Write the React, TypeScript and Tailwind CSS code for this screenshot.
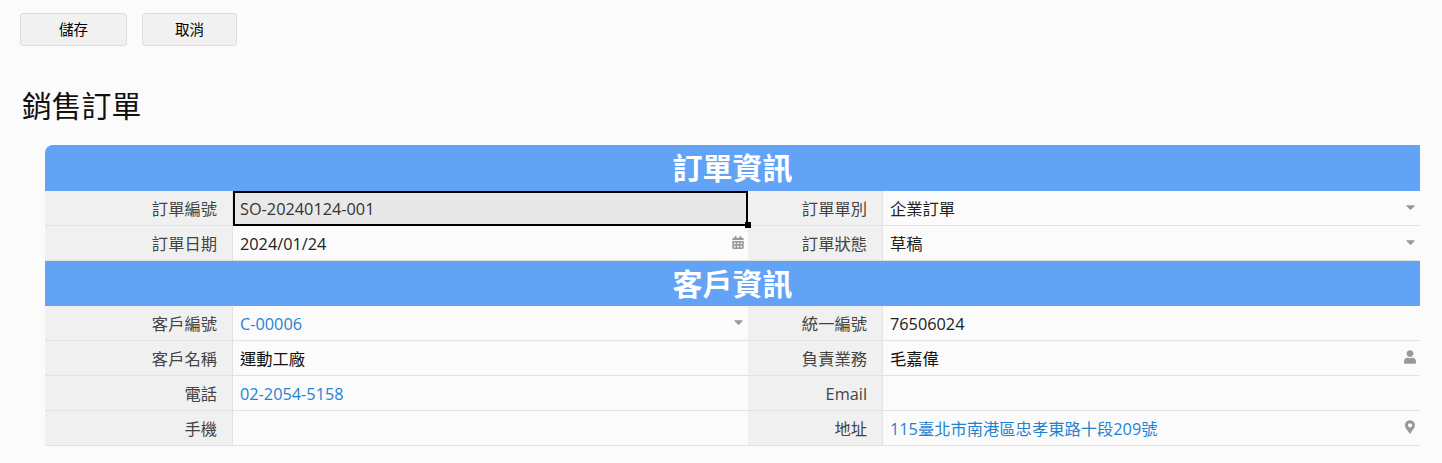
import type { ReactNode } from "react";
import { FaCalendarAlt, FaCaretDown, FaMapMarkerAlt, FaUser } from "react-icons/fa";

const font = "font-['Open_Sans','Noto_Sans_CJK_TC',sans-serif]";

function Section({ title }: { title: string }) {
    return (
        <div className="col-span-4 flex h-[45px] items-center justify-center bg-[#63a3f5] text-[30px] font-bold leading-none text-white first:h-[46px] first:rounded-tl-lg">
            {title}
        </div>
    );
}

function Label({ children }: { children: ReactNode }) {
    return (
        <div className="flex h-[35px] items-center justify-end border-r border-b border-[#e2e2e2] bg-[#f0f0f0] pr-[15px] pt-[2px] text-[#444]">
            {children}
        </div>
    );
}

interface ValueProps {
    children?: ReactNode;
    icon?: ReactNode;
    tone?: string;
}

function Value({ children, icon, tone = "text-[#222]" }: ValueProps) {
    return (
        <div className={`flex h-[35px] items-center justify-between border-b border-[#e2e2e2] pl-[7px] pr-[3px] ${tone}`}>
            <span className="pt-[2px]">{children}</span>
            {icon && <span className="flex w-[14px] justify-center text-[#999]">{icon}</span>}
        </div>
    );
}

function Caret() {
    return <FaCaretDown className="mb-[2px] h-[14px] w-[11px]" />;
}

export default function App() {
    return (
        <div className={`min-h-[463px] bg-[#fbfbfb] pl-[20px] pt-[13px] text-[16.3px] ${font}`}>
            <div className="flex gap-[15px] text-[14.5px] text-black">
                <button className="h-[33px] w-[107px] rounded-[3px] border border-[#dddddd] bg-[#f1f1f1]">儲存</button>
                <button className="h-[33px] w-[95px] rounded-[3px] border border-[#dddddd] bg-[#f1f1f1]">取消</button>
            </div>
            <h1 className="mt-[40px] pl-[2px] text-[29.8px] font-normal leading-[40px] text-[#111]">銷售訂單</h1>
            <div className="relative ml-[25px] mt-[19px] grid w-[1375px] grid-cols-[188px_515px_135px_537px]">
                <Section title="訂單資訊" />
                <Label>訂單編號</Label>
                <div className="relative flex h-[35px] items-center border-2 border-black bg-[#e8e8e8] pl-[5px] pt-[2px] text-[#333]">
                    SO-20240124-001
                    <span className="absolute -bottom-[4px] -right-[5px] h-[6px] w-[6px] bg-black" />
                </div>
                <Label>訂單單別</Label>
                <Value icon={<Caret />}>企業訂單</Value>
                <Label>訂單日期</Label>
                <Value icon={<FaCalendarAlt className="mb-[1px] h-[13px] w-[12px]" />}>2024/01/24</Value>
                <Label>訂單狀態</Label>
                <Value icon={<Caret />}>草稿</Value>
                <Section title="客戶資訊" />
                <Label>客戶編號</Label>
                <Value icon={<Caret />} tone="text-[#1f83d4]">C-00006</Value>
                <Label>統一編號</Label>
                <Value>76506024</Value>
                <Label>客戶名稱</Label>
                <Value tone="text-[#111]">運動工廠</Value>
                <Label>負責業務</Label>
                <Value icon={<FaUser className="mb-[2px] h-[14px] w-[12px]" />} tone="text-[#111]">毛嘉偉</Value>
                <Label>電話</Label>
                <Value tone="text-[#1f83d4]">02-2054-5158</Value>
                <Label>Email</Label>
                <Value />
                <Label>手機</Label>
                <Value />
                <Label>地址</Label>
                <Value icon={<FaMapMarkerAlt className="mb-[3px] h-[14px] w-[10px]" />} tone="text-[#1f83d4]">115臺北市南港區忠孝東路十段209號</Value>
            </div>
        </div>
    );
}
